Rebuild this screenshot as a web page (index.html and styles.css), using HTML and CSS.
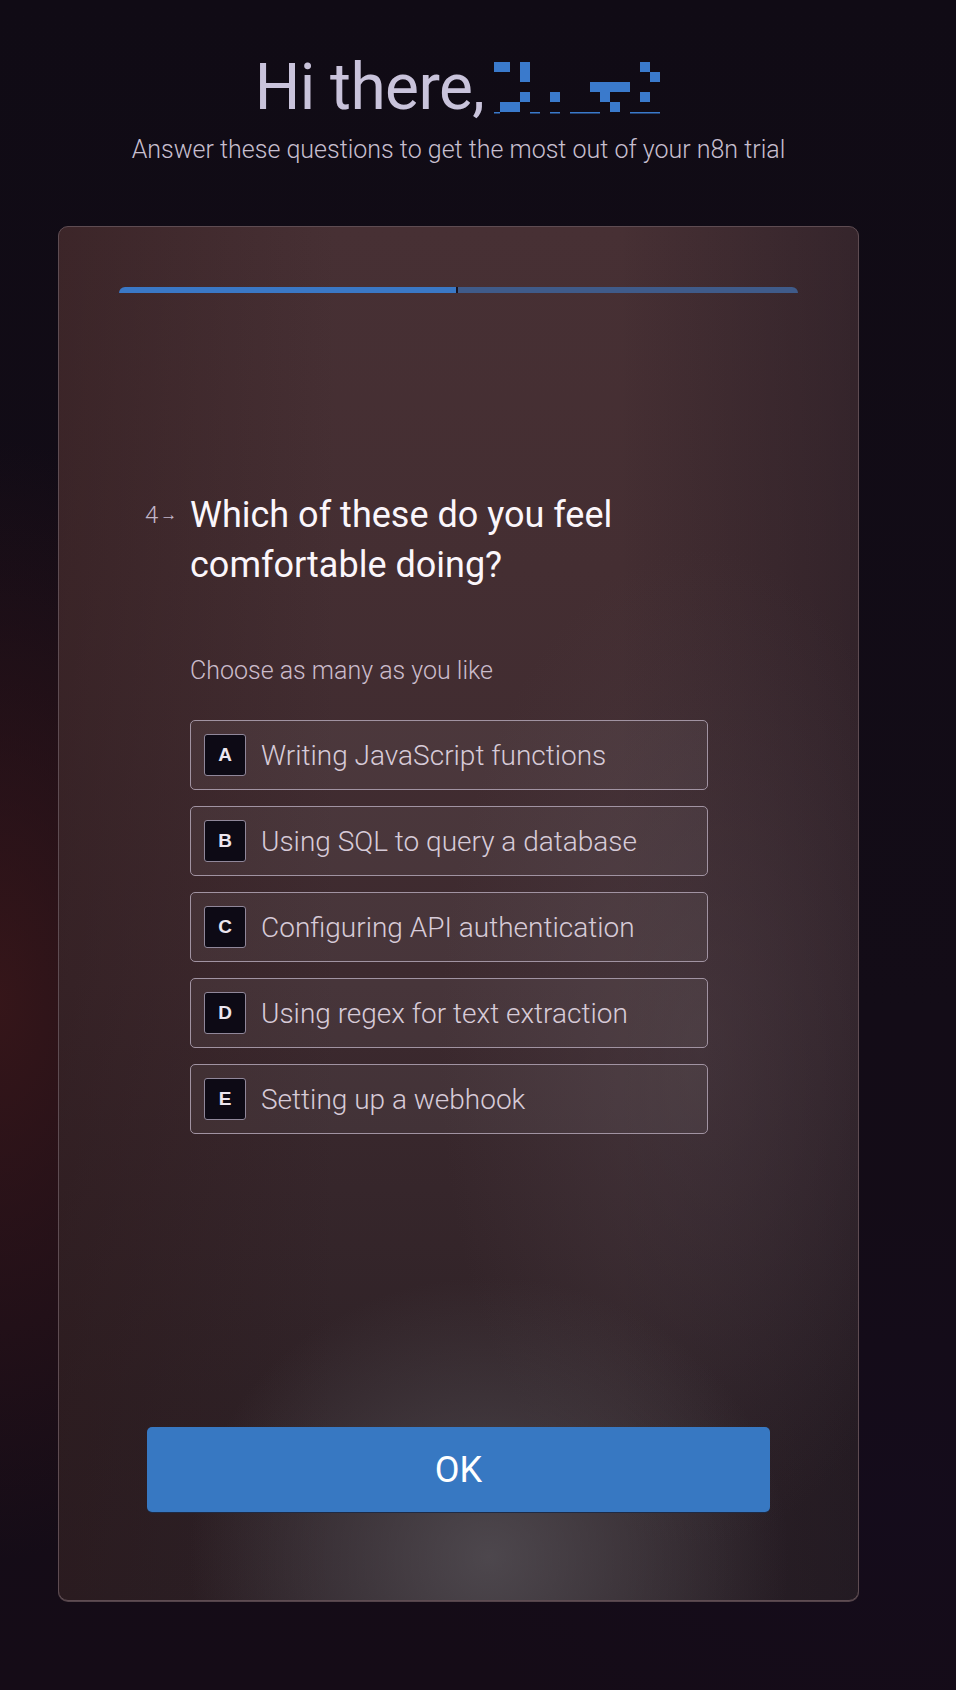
FILE: index.html
```html
<!DOCTYPE html>
<html lang="en">
<head>
<meta charset="utf-8">
<title>n8n trial survey</title>
<link rel="stylesheet" href="styles.css">
</head>
<body>
<div class="page">
  <header class="intro">
    <h1 class="title">Hi there,<svg class="name" width="172" height="54" viewBox="0 0 172 54" aria-label="redacted name"><g fill="#3a7acc"><rect x="4" y="2" width="16" height="10"/><rect x="30" y="2" width="10" height="20"/><rect x="150" y="2" width="10" height="10"/><rect x="160" y="12" width="10" height="10"/><rect x="100" y="22" width="40" height="10"/><rect x="30" y="32" width="10" height="10"/><rect x="60" y="32" width="10" height="10"/><rect x="110" y="32" width="10" height="10"/><rect x="150" y="32" width="10" height="10"/><rect x="10" y="42" width="20" height="10"/><rect x="120" y="42" width="10" height="10"/><rect x="4" y="52" width="6" height="1.5"/><rect x="40" y="52" width="10" height="1.5"/><rect x="60" y="52" width="10" height="1.5"/><rect x="80" y="52" width="30" height="1.5"/><rect x="140" y="52" width="30" height="1.5"/></g></svg></h1>
    <p class="subtitle">Answer these questions to get the most out of your n8n trial</p>
  </header>

  <main class="card">
    <div class="progress">
      <div class="progress-fill"></div>
      <div class="progress-rest"></div>
    </div>

    <section class="question">
      <div class="qnum"><span class="qdigit">4</span><span class="qarrow">&rarr;</span></div>
      <h2 class="qtext">Which of these do you feel comfortable doing?</h2>
    </section>

    <p class="hint">Choose as many as you like</p>

    <ul class="options">
      <li class="option"><span class="key">A</span><span class="label">Writing JavaScript functions</span></li>
      <li class="option"><span class="key">B</span><span class="label">Using SQL to query a database</span></li>
      <li class="option"><span class="key">C</span><span class="label">Configuring API authentication</span></li>
      <li class="option"><span class="key">D</span><span class="label">Using regex for text extraction</span></li>
      <li class="option"><span class="key">E</span><span class="label">Setting up a webhook</span></li>
    </ul>

    <button class="ok" type="button">OK</button>
  </main>
</div>
</body>
</html>
```

FILE: styles.css
```css
html, body {
  margin: 0;
  padding: 0;
}

body {
  width: 956px;
  min-height: 1690px;
  font-family: Roboto, "Liberation Sans", Arial, sans-serif;
  background-color: #110c16;
  background-image:
    radial-gradient(ellipse 280px 560px at 0px 1000px, rgba(62, 24, 26, 0.8), rgba(62, 24, 26, 0) 100%),
    radial-gradient(ellipse 500px 300px at 900px 1500px, rgba(20, 12, 30, 0.6), rgba(20, 12, 30, 0) 100%),
    linear-gradient(to bottom, #100b15 0%, #130c17 60%, #150c17 100%);
}

.page {
  width: 917px;
  padding-top: 52px;
  box-sizing: border-box;
}

.intro {
  text-align: center;
}

.title {
  margin: 0;
  font-size: 64px;
  line-height: 72px;
  font-weight: 400;
  letter-spacing: -0.6px;
  color: #c9c3db;
}

.name {
  display: inline-block;
  vertical-align: -5px;
  margin-left: 6px;
}

.subtitle {
  margin: 11px 0 0;
  font-size: 25px;
  line-height: 30px;
  font-weight: 300;
  color: #c7bfcf;
}

.card {
  display: block;
  box-sizing: border-box;
  width: 801px;
  height: 1375px;
  margin: 61px 0 0 58px;
  padding: 60px 60px 0;
  border: 1px solid #5e4c52;
  border-radius: 10px;
  background-color: #3a282d;
  background-image:
    radial-gradient(ellipse 300px 280px at 430px 1330px, rgba(88, 84, 90, 0.75), rgba(88, 84, 90, 0) 100%),
    radial-gradient(ellipse 260px 500px at 640px 820px, rgba(80, 66, 74, 0.45), rgba(80, 66, 74, 0) 100%),
    linear-gradient(to right, rgba(40, 18, 20, 0.35) 0%, rgba(40, 18, 20, 0) 35%, rgba(0, 0, 0, 0) 70%, rgba(20, 16, 28, 0.35) 100%),
    linear-gradient(to bottom, #473034 0%, #442e32 25%, #3d2a2f 55%, #2f2227 85%, #2b2026 100%);
  box-shadow: 0 1px 0 #54444a;
}

.progress {
  display: flex;
  height: 6px;
  border-radius: 8px 8px 0 0;
  overflow: hidden;
}

.progress-fill {
  flex: 0 0 337px;
  background: #3a78c6;
  border-right: 2px solid #191420;
}

.progress-rest {
  flex: 1;
  background: #3f5b8a;
}

.question {
  display: flex;
  margin: 197px 0 0 26px;
}

.qnum {
  flex: 0 0 45px;
  display: flex;
  align-items: baseline;
  line-height: 50px;
  color: #c2b6c9;
}

.qdigit {
  font-size: 24px;
  font-weight: 300;
}

.qarrow {
  font-size: 17px;
  font-weight: 500;
  margin-left: 2px;
  position: relative;
  top: -3px;
}

.qtext {
  margin: 0;
  width: 470px;
  font-size: 36px;
  line-height: 50px;
  font-weight: 400;
  color: #fbf6fb;
}

.hint {
  margin: 66px 0 0 71px;
  font-size: 25px;
  line-height: 30px;
  font-weight: 300;
  color: #cbbccb;
}

.options {
  list-style: none;
  margin: 34px 0 0 71px;
  padding: 0;
  width: 518px;
  display: flex;
  flex-direction: column;
  gap: 16px;
}

.option {
  box-sizing: border-box;
  height: 70px;
  display: flex;
  align-items: center;
  padding-left: 13px;
  border: 1.5px solid #a193a2;
  border-radius: 5px;
  background: rgba(255, 255, 255, 0.055);
}

.key {
  box-sizing: border-box;
  flex: 0 0 42px;
  height: 42px;
  display: flex;
  align-items: center;
  justify-content: center;
  border: 1.5px solid #90879a;
  border-radius: 3px;
  background: #0d0a15;
  color: #ece6ef;
  font-family: "Liberation Sans", Arial, sans-serif;
  font-weight: 700;
  font-size: 19px;
}

.label {
  margin-left: 15px;
  font-size: 28px;
  font-weight: 300;
  color: #d7cbd8;
  white-space: nowrap;
}

.ok {
  display: block;
  width: 623px;
  height: 85px;
  margin: 293px auto 0;
  padding: 0;
  border: 0;
  border-radius: 5px;
  background: #3778c2;
  color: #ffffff;
  font-family: Roboto, "Liberation Sans", Arial, sans-serif;
  font-size: 36px;
  font-weight: 400;
  box-shadow: 0 1px 0 #1e2a44;
}
```
